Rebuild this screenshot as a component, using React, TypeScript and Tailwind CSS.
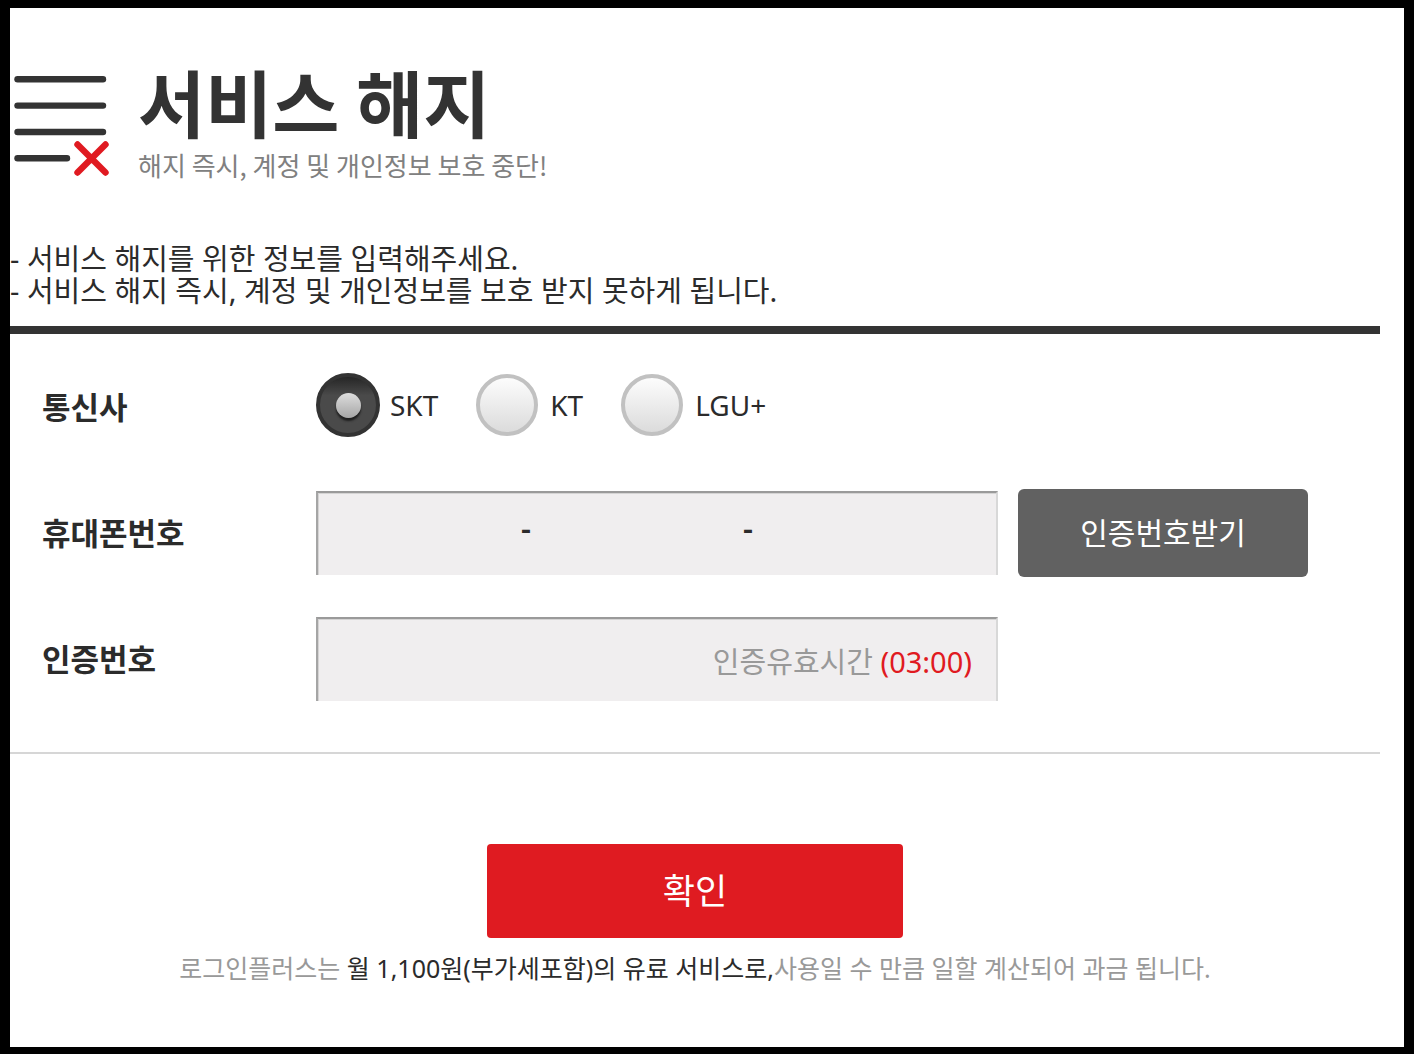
import { Fragment, useState } from "react";
import type { FormEvent } from "react";

const carriers = ["SKT", "KT", "LGU+"];

const MenuCloseIcon = () => (
  <svg
    width="96"
    height="108"
    viewBox="0 0 96 108"
    fill="none"
    strokeLinecap="round"
    aria-hidden="true"
    className="shrink-0"
  >
    <g stroke="#333333" strokeWidth="6.4">
      <path d="M3.5 9.3H89" />
      <path d="M3.5 35.6H89" />
      <path d="M3.5 62H89" />
      <path d="M3.5 88.2H53" />
    </g>
    <path
      d="M63.5 74.5L91.5 102.5M91.5 74.5L63.5 102.5"
      stroke="#e01a21"
      strokeWidth="6.4"
    />
  </svg>
);

const App = () => {
  const [carrier, setCarrier] = useState("SKT");
  const [phone, setPhone] = useState(["", "", ""]);
  const [code, setCode] = useState("");

  const handlePhoneChange = (index: number, value: string) => {
    setPhone((prev) => prev.map((part, i) => (i === index ? value : part)));
  };

  const handleSubmit = (event: FormEvent) => {
    event.preventDefault();
  };

  return (
    <div className="flex min-h-screen flex-col bg-black px-[10px] pt-2 pb-[7px] font-['Noto_Sans','Noto_Sans_CJK_KR',sans-serif] text-[#2b2b2b]">
      <main className="flex-1 bg-white pr-6">
        <header className="flex items-center gap-7 pt-[57px] pl-1">
          <MenuCloseIcon />
          <div className="font-['Noto_Sans_CJK_KR',sans-serif]">
            <h1 className="text-[73px] leading-[70px] font-bold text-[#333333]">
              서비스 해지
            </h1>
            <p className="mt-3 text-[26px] leading-9 text-[#808080]">
              해지 즉시, 계정 및 개인정보 보호 중단!
            </p>
          </div>
        </header>

        <form onSubmit={handleSubmit}>
          <ul className="mt-[60px] text-[29px] leading-8">
            <li>- 서비스 해지를 위한 정보를 입력해주세요.</li>
            <li>- 서비스 해지 즉시, 계정 및 개인정보를 보호 받지 못하게 됩니다.</li>
          </ul>

          <div className="mt-[19px] border-t-8 border-b-2 border-t-[#333333] border-b-[#d6d6d6] pt-[39px] pb-[51px] pl-8">
            <div
              role="radiogroup"
              aria-labelledby="carrier-label"
              className="grid grid-cols-[274px_1fr] items-center"
            >
              <span
                id="carrier-label"
                className="pt-1 text-[31px] leading-10 font-bold"
              >
                통신사
              </span>
              <div className="flex flex-wrap items-center gap-[38px]">
                {carriers.map((name) => (
                  <label
                    key={name}
                    className="flex items-center gap-[10px] text-[28px] leading-10"
                  >
                    <input
                      type="radio"
                      name="carrier"
                      value={name}
                      checked={carrier === name}
                      onChange={() => setCarrier(name)}
                      className="mr-0.5 grid size-[62px] shrink-0 appearance-none place-items-center rounded-full border-4 border-[#c1c1c1] bg-linear-to-b from-white to-[#d9d9d9] bg-origin-border checked:mr-0 checked:size-16 checked:border-[#333333] checked:from-[#1f1f1f] checked:via-[#4a4a4a] checked:via-35% checked:to-[#4a4a4a] checked:before:size-[25px] checked:before:rounded-full checked:before:bg-linear-to-b checked:before:from-[#dedede] checked:before:to-[#a6a6a6] checked:before:shadow-[0_3px_2px_#1f1f1f] checked:before:content-['']"
                    />
                    {name}
                  </label>
                ))}
              </div>
            </div>

            <div
              role="group"
              aria-labelledby="phone-label"
              className="mt-[52px] grid grid-cols-[274px_minmax(0,682px)_auto] items-center"
            >
              <span
                id="phone-label"
                className="text-[31px] leading-10 font-bold"
              >
                휴대폰번호
              </span>
              <div className="flex h-[84px] items-center border-t-2 border-r-2 border-l-2 border-t-[#9a9a9a] border-r-[#d8d8d8] border-l-[#a5a5a5] bg-[#f0eeef] pr-10 pb-3 text-[29px] shadow-[inset_1px_1px_0_#d5d4d4]">
                {phone.map((part, index) => (
                  <Fragment key={index}>
                    {index > 0 && (
                      <span className="w-7 text-center text-[31px] leading-10 font-semibold">
                        -
                      </span>
                    )}
                    <input
                      type="tel"
                      aria-label={`휴대폰번호 ${index + 1}`}
                      maxLength={4}
                      value={part}
                      onChange={(e) => handlePhoneChange(index, e.target.value)}
                      className="h-full min-w-0 flex-1 bg-transparent text-center outline-none"
                    />
                  </Fragment>
                ))}
              </div>
              <button
                type="button"
                className="ml-5 h-[88px] w-[290px] rounded-[6px] bg-[#616161] text-[30px] leading-10 text-white"
              >
                인증번호받기
              </button>
            </div>

            <div className="mt-10 grid grid-cols-[274px_minmax(0,682px)] items-center">
              <label htmlFor="code" className="text-[31px] leading-10 font-bold">
                인증번호
              </label>
              <div className="flex h-[84px] items-center border-t-2 border-r-2 border-l-2 border-t-[#9a9a9a] border-r-[#d8d8d8] border-l-[#a5a5a5] bg-[#f0eeef] pt-1 pr-6 text-[29px] shadow-[inset_1px_1px_0_#d5d4d4]">
                <input
                  id="code"
                  type="text"
                  inputMode="numeric"
                  value={code}
                  onChange={(e) => setCode(e.target.value)}
                  className="h-full min-w-0 flex-1 bg-transparent pl-5 outline-none"
                />
                <p className="shrink-0 leading-10 text-[#999999]">
                  인증유효시간 <span className="text-[#e01a21]">(03:00)</span>
                </p>
              </div>
            </div>
          </div>

          <div className="mt-[90px] pb-10 text-center">
            <button
              type="submit"
              className="h-[94px] w-[416px] rounded-[4px] bg-[#df1b21] text-[35px] leading-10 text-white"
            >
              확인
            </button>
            <p className="mt-3 text-[25px] leading-9 text-[#999999]">
              로그인플러스는{" "}
              <span className="text-[#2b2b2b]">
                월 1,100원(부가세포함)의 유료 서비스로,
              </span>
              사용일 수 만큼 일할 계산되어 과금 됩니다.
            </p>
          </div>
        </form>
      </main>
    </div>
  );
};

export default App;
